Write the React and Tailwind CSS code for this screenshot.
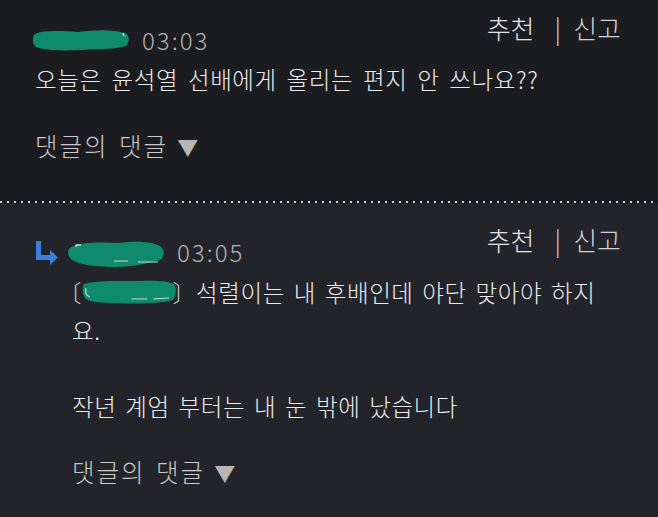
import React from 'react';

const FONT = "font-['Noto_Sans_CJK_KR','Noto_Sans',sans-serif]";

// green scribble that hides the nickname
const NameBlob = ({ w = 98, h = 24 }) => (
  <svg width={w} height={h} viewBox="0 0 98 24" className="shrink-0">
    <path
      d="M2 6 C10 2 30 3 45 4 C60 2 80 1 92 5 C97 7 97 14 93 18 C80 22 60 21 45 22 C28 23 10 22 3 19 C-1 15 -1 9 2 6 Z"
      fill="#0f8a6b"
    />
    <path d="M90 5 L91 8" stroke="#d8d8d8" strokeWidth="1.5" />
  </svg>
);

const ReplyNameBlob = () => (
  <svg width="98" height="30" viewBox="0 0 98 30" className="shrink-0">
    <path
      d="M3 9 C12 4 32 4 50 5 C66 3 82 3 92 8 C97 11 97 19 92 22 C78 26 62 29 48 29 C30 29 12 27 4 22 C-1 18 -1 12 3 9 Z"
      fill="#0f8a6b"
    />
    <path d="M8 9 L8 7 L13 7" stroke="#d8d8d8" strokeWidth="1.3" fill="none" />
    <path d="M46 23 L60 23 M70 24 L90 24" stroke="#cfd8d4" strokeWidth="1" />
  </svg>
);

const InlineBlob = () => (
  <svg width="95" height="26" viewBox="0 0 96 26" className="shrink-0">
    <path
      d="M2 5 C14 1 40 2 60 2 C74 1 88 2 93 5 C96 9 95 17 92 21 C78 25 54 25 34 24 C18 24 6 23 3 19 C0 14 0 9 2 5 Z"
      fill="#0f8a6b"
    />
    <path d="M4 9 C3 13 4 17 8 18" stroke="#d8d8d8" strokeWidth="1.3" fill="none" />
    <path d="M50 20 L66 20 M72 20 L88 19" stroke="#cfd8d4" strokeWidth="1" />
  </svg>
);

const ReplyArrow = () => (
  <svg width="24" height="26" viewBox="0 0 24 26" className="shrink-0">
    <path d="M1 1 H6 V15 H15 V20 H1 Z" fill="#3b7fdb" />
    <path d="M15 10 L23 17.5 L15 25 Z" fill="#3b7fdb" />
  </svg>
);

const Actions = () => (
  <div className="flex items-center text-[26px] leading-[28px] font-light text-[#e4e4e4]">
    <span>추천</span>
    <span className="ml-[20px] mr-[12px] text-[#cfcfcf]">|</span>
    <span className="text-[#d2d2d2]">신고</span>
  </div>
);

const ReplyToggle = () => (
  <div className="flex items-center text-[24.5px] leading-[28px] font-light tracking-[2px] [word-spacing:3px] text-[#c9c9c9]">
    <span>댓글의 댓글</span>
    <span className="ml-[9px] text-[21px] tracking-normal text-[#b9b5b0]">▼</span>
  </div>
);

const Time = ({ children }) => (
  <span className="text-[24px] leading-[26px] font-light tracking-[2px] text-[#b3b3b3]">{children}</span>
);

export default function App() {
  return (
    <div className={`w-[658px] h-[517px] overflow-hidden bg-[#222429] ${FONT}`}>
      <section className="h-[201px] bg-[#1b1c1f] pl-[33px] pr-[37px] pt-[14px]">
        <div className="flex justify-between items-start">
          <div className="flex items-center gap-[11px] mt-[13px]">
            <NameBlob />
            <Time>03:03</Time>
          </div>
          <Actions />
        </div>
        <p className="mt-[12px] ml-[2px] text-[23.5px] leading-[28px] font-light tracking-[0.6px] text-[#ececec] [word-spacing:4px]">
          오늘은 윤석열 선배에게 올리는 편지 안 쓰나요??
        </p>
        <div className="mt-[39px] ml-[2px]">
          <ReplyToggle />
        </div>
      </section>

      <div className="h-[2px] bg-[repeating-linear-gradient(90deg,#cfcfcf_0_2px,transparent_2px_7px)] bg-[#1b1c1f]" />

      <section className="pl-[35px] pr-[37px] pt-[23px]">
        <div className="flex justify-between items-start">
          <div className="flex items-center mt-[12px]">
            <ReplyArrow />
            <div className="ml-[9px]">
              <ReplyNameBlob />
            </div>
            <span className="ml-[11px]">
              <Time>03:05</Time>
            </span>
          </div>
          <Actions />
        </div>

        <div className="ml-[37px] mt-[5px] text-[23.5px] leading-[38px] font-light tracking-[0.6px] text-[#ececec] [word-spacing:3px]">
          <div className="flex items-center">
            <span className="-ml-[14px] tracking-normal text-[#cdd6de]">〔</span>
            <InlineBlob />
            <span className="-ml-[4px] tracking-normal text-[#cdd6de]">〕</span>
            <span>석렬이는 내 후배인데 야단 맞아야 하지</span>
          </div>
          <div>요.</div>
          <div className="h-[38px]" />
          <div>작년 계엄 부터는 내 눈 밖에 났습니다</div>
          <div className="mt-[33px]">
            <ReplyToggle />
          </div>
        </div>
      </section>
    </div>
  );
}
